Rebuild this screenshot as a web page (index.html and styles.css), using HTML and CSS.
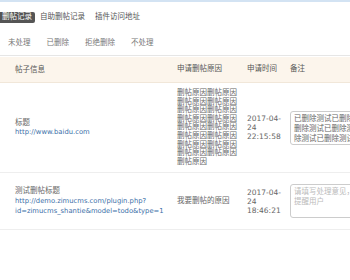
FILE: index.html
```html
<!DOCTYPE html>
<html>
<head>
    <meta charset="UTF-8">
    <title>删帖记录</title>
    <link rel="stylesheet" href="styles.css">
</head>
<body>
<div class="page">
    <ul class="tabs">
        <li class="on">删帖记录</li>
        <li>自助删帖记录</li>
        <li>插件访问地址</li>
    </ul>
    <ul class="subtabs">
        <li>未处理</li>
        <li>已删除</li>
        <li>拒绝删除</li>
        <li>不处理</li>
    </ul>
    <table class="list">
        <colgroup>
            <col class="w-info">
            <col class="w-reason">
            <col class="w-time">
            <col>
        </colgroup>
        <thead>
        <tr>
            <th class="c-info">帖子信息</th>
            <th>申请删帖原因</th>
            <th>申请时间</th>
            <th>备注</th>
        </tr>
        </thead>
        <tbody>
        <tr>
            <td class="c-info">
                <p>标题</p>
                <a href="#">http://www.baidu.com</a>
            </td>
            <td class="c-reason">删帖原因删帖原因删帖原因删帖原因删帖原因删帖原因删帖原因删帖原因删帖原因删帖原因删帖原因删帖原因删帖原因删帖原因删帖原因删帖原因删帖原因</td>
            <td class="c-time">2017-04-<br>24<br>22:15:58</td>
            <td><textarea>已删除测试已删除删除测试已删除测除测试已删除测试已删除测试已删除</textarea></td>
        </tr>
        <tr>
            <td class="c-info">
                <p>测试删帖标题</p>
                <a href="#">http://demo.zimucms.com/plugin.php?<br>id=zimucms_shantie&amp;model=todo&amp;type=1</a>
            </td>
            <td class="c-reason">我要删帖的原因</td>
            <td class="c-time">2017-04-<br>24<br>18:46:21</td>
            <td><textarea placeholder="请填写处理意见，提醒用户"></textarea></td>
        </tr>
        </tbody>
    </table>
</div>
</body>
</html>
```

FILE: styles.css
```css
* {
    margin: 0;
    padding: 0;
}

ul, li {
    list-style: none;
}

html, body {
    width: 100%;
    height: 100%;
    overflow: hidden;
    background: #fff;
}

body {
    font-family: "DejaVu Sans", "Noto Sans CJK SC", sans-serif;
    font-size: 7.5px;
    line-height: 8.75px;
    color: #666;
}

.page {
    width: 420px;
    border-top: 2px solid #d3e3f3;
}

.tabs {
    display: flex;
    height: 27px;
    align-items: center;
    padding-top: 2px;
}

.tabs li {
    padding: 1px 5px;
    color: #555;
}

.tabs li.on {
    margin-left: -3px;
    padding: 1px 3px 1px 5px;
    background: #555;
    color: #fff;
    border-radius: 2px;
}

.subtabs {
    display: flex;
    height: 24px;
    align-items: center;
    border-bottom: 1px solid #e6e6e6;
}

.subtabs li {
    padding: 0 8px;
    color: #777;
}

.list {
    width: 420px;
    table-layout: fixed;
    border-collapse: collapse;
    margin-top: 1px;
}

.w-info {
    width: 172px;
}

.w-reason {
    width: 70px;
}

.w-time {
    width: 43px;
}

.list th {
    height: 25px;
    padding: 0 5px;
    background: #fcf5ec;
    border-bottom: 1px solid #f1e7d9;
    font-weight: normal;
    color: #555;
    text-align: left;
}

.list td {
    padding: 6px 5px;
    border-bottom: 1px solid #eee;
    vertical-align: middle;
}

.list .c-info {
    padding-left: 15px;
    line-height: 9.5px;
}

.list .c-reason {
    line-height: 8.6px;
}

.list .c-time {
    white-space: nowrap;
    line-height: 9px;
}

.list a {
    font-size: 6.8px;
    color: #3b6fa8;
    text-decoration: none;
}

.list textarea {
    display: block;
    margin: 5px 0;
    width: 62px;
    height: 28px;
    padding: 2px 3px;
    border: 1px solid #ccc;
    border-radius: 3px;
    font-family: "DejaVu Sans", "Noto Sans CJK SC", sans-serif;
    font-size: 7.5px;
    line-height: 10px;
    color: #666;
    resize: none;
    overflow: hidden;
}

.list textarea::placeholder {
    color: #bbb;
}
```
